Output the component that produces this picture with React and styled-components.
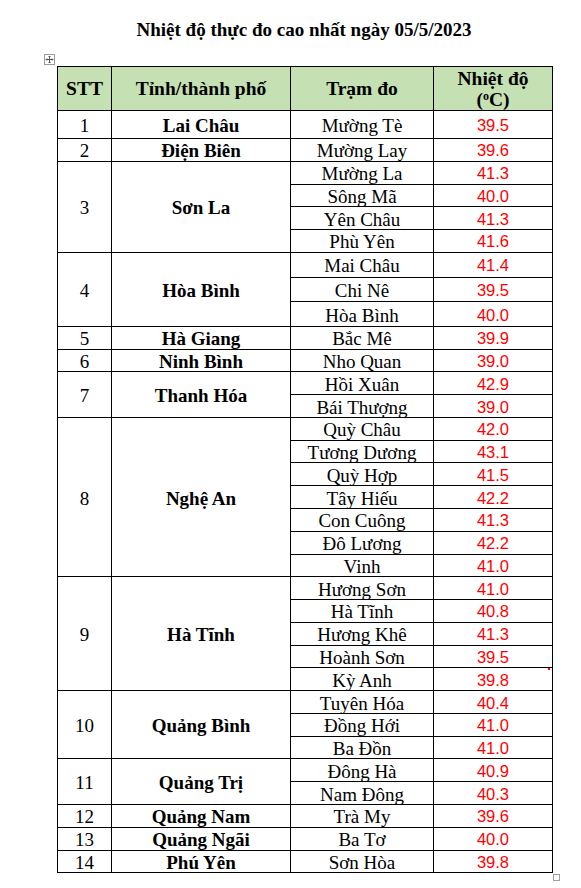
import React from "react";
import styled, { createGlobalStyle } from "styled-components";

const GlobalStyle = createGlobalStyle`
  html, body {
    margin: 0;
    padding: 0;
    background: #ffffff;
  }
  body {
    font-family: "Liberation Serif", "Times New Roman", serif;
    color: #000;
  }
`;

const data = [
  { stt: 1, tinh: "Lai Châu", h: 28, tram: [["Mường Tè", "39.5"]] },
  { stt: 2, tinh: "Điện Biên", tram: [["Mường Lay", "39.6"]] },
  {
    stt: 3,
    tinh: "Sơn La",
    tram: [
      ["Mường La", "41.3"],
      ["Sông Mã", "40.0"],
      ["Yên Châu", "41.3"],
      ["Phù Yên", "41.6"],
    ],
  },
  {
    stt: 4,
    tinh: "Hòa Bình",
    h: 24.7,
    tram: [
      ["Mai Châu", "41.4"],
      ["Chi Nê", "39.5"],
      ["Hòa Bình", "40.0"],
    ],
  },
  { stt: 5, tinh: "Hà Giang", tram: [["Bắc Mê", "39.9"]] },
  { stt: 6, tinh: "Ninh Bình", tram: [["Nho Quan", "39.0"]] },
  {
    stt: 7,
    tinh: "Thanh Hóa",
    tram: [
      ["Hồi Xuân", "42.9"],
      ["Bái Thượng", "39.0"],
    ],
  },
  {
    stt: 8,
    tinh: "Nghệ An",
    tram: [
      ["Quỳ Châu", "42.0"],
      ["Tương Dương", "43.1"],
      ["Quỳ Hợp", "41.5"],
      ["Tây Hiếu", "42.2"],
      ["Con Cuông", "41.3"],
      ["Đô Lương", "42.2"],
      ["Vinh", "41.0"],
    ],
  },
  {
    stt: 9,
    tinh: "Hà Tĩnh",
    tram: [
      ["Hương Sơn", "41.0"],
      ["Hà Tĩnh", "40.8"],
      ["Hương Khê", "41.3"],
      ["Hoành Sơn", "39.5"],
      ["Kỳ Anh", "39.8"],
    ],
  },
  {
    stt: 10,
    tinh: "Quảng Bình",
    tram: [
      ["Tuyên Hóa", "40.4"],
      ["Đồng Hới", "41.0"],
      ["Ba Đồn", "41.0"],
    ],
  },
  {
    stt: 11,
    tinh: "Quảng Trị",
    tram: [
      ["Đông Hà", "40.9"],
      ["Nam Đông", "40.3"],
    ],
  },
  { stt: 12, tinh: "Quảng Nam", tram: [["Trà My", "39.6"]] },
  { stt: 13, tinh: "Quảng Ngãi", tram: [["Ba Tơ", "40.0"]] },
  { stt: 14, tinh: "Phú Yên", tram: [["Sơn Hòa", "39.8"]] },
];

const Page = styled.div`
  width: 581px;
  min-height: 888px;
  position: relative;
  padding-top: 19px;
  box-sizing: border-box;
`;

const Title = styled.h1`
  margin: 0;
  text-align: center;
  font-size: 19px;
  font-weight: bold;
  line-height: 22px;
  padding-left: 27px;
`;

const TableWrap = styled.div`
  position: relative;
  margin: 25px 0 0 57px;
  width: 495px;
`;

const MoveHandle = styled.div`
  position: absolute;
  left: -13px;
  top: -12px;
  width: 9px;
  height: 9px;
  border: 1px solid #9a9a9a;
  background: #fff;
  display: flex;
  align-items: center;
  justify-content: center;
`;

const ResizeHandle = styled.div`
  position: absolute;
  right: -8px;
  bottom: -8px;
  width: 5px;
  height: 5px;
  border: 1px solid #a0a0a0;
  background: #fff;
`;

const RedDot = styled.div`
  position: absolute;
  left: 491px;
  top: 602px;
  width: 2px;
  height: 2px;
  background: #ff0000;
`;

const Table = styled.table`
  border-collapse: collapse;
  table-layout: fixed;
  width: 495px;
  border: 1.5px solid #000;
`;

const Col = styled.col`
  width: ${(p) => p.$w}px;
`;

const HeadRow = styled.tr`
  height: 44px;
  background: #c5e0b3;
`;

const Th = styled.th`
  border: 1px solid #000;
  font-size: 19.5px;
  font-weight: bold;
  line-height: 21px;
  padding: 0 2px;
  text-align: center;
  vertical-align: middle;
`;

const Sup = styled.sup`
  font-size: 12px;
  vertical-align: 6px;
  line-height: 0;
`;

const Row = styled.tr`
  height: ${(p) => p.$h || 22.78}px;
`;

const Td = styled.td`
  border: 1px solid #000;
  padding: 2px 2px 0;
  font-size: 19px;
  line-height: 19px;
  text-align: center;
  vertical-align: middle;
  font-weight: ${(p) => (p.$bold ? "bold" : "normal")};
  white-space: nowrap;
`;

const Temp = styled(Td)`
  font-family: "Liberation Sans", Arial, sans-serif;
  font-size: 16.5px;
  color: #ff0000;
`;

const MoveIcon = () => (
  <svg width="9" height="9" viewBox="0 0 9 9" fill="none" stroke="#555" strokeWidth="1">
    <path d="M4.5 1v7M1 4.5h7" />
    <path d="M3.5 2l1-1 1 1M3.5 7l1 1 1-1M2 3.5l-1 1 1 1M7 3.5l1 1-1 1" />
  </svg>
);

export default function App() {
  return (
    <>
      <GlobalStyle />
      <Page>
        <Title>Nhiệt độ thực đo cao nhất ngày 05/5/2023</Title>
        <TableWrap>
          <MoveHandle>
            <MoveIcon />
          </MoveHandle>
          <Table>
            <colgroup>
              <Col $w={54} />
              <Col $w={179} />
              <Col $w={143} />
              <Col $w={119} />
            </colgroup>
            <thead>
              <HeadRow>
                <Th>STT</Th>
                <Th>Tỉnh/thành phố</Th>
                <Th>Trạm đo</Th>
                <Th>
                  Nhiệt độ
                  <br />
                  (<Sup>o</Sup>C)
                </Th>
              </HeadRow>
            </thead>
            <tbody>
              {data.map((g) =>
                g.tram.map(([name, t], i) => (
                  <Row key={g.stt + "-" + i} $h={g.h}>
                    {i === 0 && (
                      <>
                        <Td rowSpan={g.tram.length}>{g.stt}</Td>
                        <Td rowSpan={g.tram.length} $bold>
                          {g.tinh}
                        </Td>
                      </>
                    )}
                    <Td>{name}</Td>
                    <Temp>{t}</Temp>
                  </Row>
                ))
              )}
            </tbody>
          </Table>
          <ResizeHandle />
          <RedDot />
        </TableWrap>
      </Page>
    </>
  );
}
